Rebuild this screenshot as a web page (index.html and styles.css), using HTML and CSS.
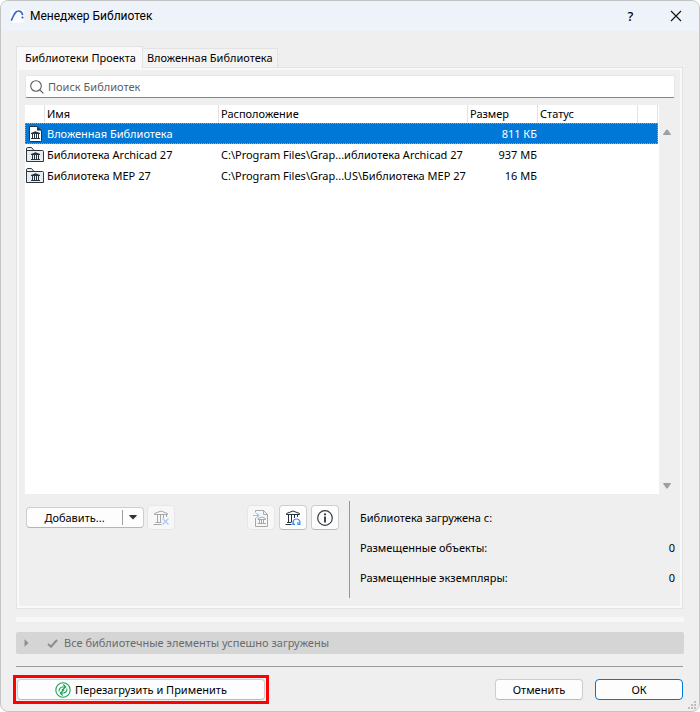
FILE: index.html
```html
<!DOCTYPE html>
<html lang="ru">
<head>
<meta charset="utf-8">
<title>Менеджер Библиотек</title>
<meta name="viewport" content="width=device-width, initial-scale=1">
<link rel="stylesheet" href="styles.css">
</head>
<body>
<svg class="sprite" aria-hidden="true">
  <symbol id="folder" viewBox="0 0 18 16">
    <path d="M.5 14.500V2Q.5 .5 1.500 .5H5.500L8 3.500H16.500Q17.500 3.500 17.500 4.500V14.500Z" fill="#e9edf2" stroke="#2b3640"/>
    <path d="M1 3.500H8" stroke="#2b3640"/>
    <path d="M5 8V7L9.500 5.300 14 7V8ZM6 8h1v4H6ZM8 8h1v4H8ZM10 8h1v4H10ZM12 8h1v4H12ZM5 12h9v1H5Z" fill="#26323c"/>
  </symbol>
</svg>
<main class="window">
  <header class="titlebar">
    <svg class="logo" viewBox="0 0 14 14" aria-hidden="true">
      <rect width="14" height="14" rx="2" fill="#fafcff"/>
      <path d="M1.500 11C4 6 5 2 8.500 2c2.500 0 3.500 1.500 4 3.500" fill="none" stroke="#4169c4" stroke-width="1.700" stroke-linecap="round"/>
      <circle cx="12.500" cy="8.500" r="1" fill="#26499c"/>
    </svg>
    <h1 class="title">Менеджер Библиотек</h1>
    <button class="caption-button help" type="button" aria-label="Справка">?</button>
    <button class="caption-button" type="button" aria-label="Закрыть">
      <svg width="12" height="12" viewBox="0 0 12 12"><path d="M1 1 11 11M11 1 1 11" stroke="#111" stroke-width="1.100"/></svg>
    </button>
  </header>

  <div class="content">
    <nav class="tabs" role="tablist">
      <button class="tab active" type="button" role="tab" aria-selected="true">Библиотеки Проекта</button>
      <button class="tab" type="button" role="tab" aria-selected="false">Вложенная Библиотека</button>
    </nav>
    <section class="panel">
      <label class="search">
        <svg width="14" height="14" viewBox="0 0 14 14" aria-hidden="true"><circle cx="6" cy="6" r="5.300" fill="none" stroke="#5c5c5c" stroke-width="1.100"/><path d="M9.800 9.800 13.300 13.300" stroke="#5c5c5c" stroke-width="1.200"/></svg>
        <input type="search" placeholder="Поиск Библиотек" aria-label="Поиск Библиотек">
      </label>
      <div class="list">
        <div class="sheet">
          <table>
            <colgroup><col class="c-icon"><col class="c-name"><col><col class="c-size"><col class="c-status"><col class="c-end"></colgroup>
            <thead>
              <tr><th></th><th>Имя</th><th>Расположение</th><th>Размер</th><th>Статус</th><th></th></tr>
            </thead>
            <tbody>
              <tr class="selected">
                <td class="icon"><svg width="18" height="16" viewBox="0 0 18 16" aria-hidden="true"><path d="M3.500.5H11L15.500 5V14.500Q15.500 15.500 14.500 15.500H4.500Q3.500 15.500 3.500 14.500Z" fill="#fff" stroke="#26323c"/><path d="M11 .5V4.500H15.500ZM5 8V7L9.500 5.300 14 7V8ZM6 8h1v4H6ZM8 8h1v4H8ZM10 8h1v4H10ZM12 8h1v4H12ZM5 12h9v1H5Z" fill="#26323c"/></svg></td>
                <td>Вложенная Библиотека</td><td></td><td class="num">811 КБ</td><td></td><td></td>
              </tr>
              <tr>
                <td class="icon"><svg width="18" height="16"><use href="#folder"/></svg></td>
                <td>Библиотека Archicad 27</td><td>C:\Program Files\Grap...иблиотека Archicad 27</td><td class="num">937 МБ</td><td></td><td></td>
              </tr>
              <tr>
                <td class="icon"><svg width="18" height="16"><use href="#folder"/></svg></td>
                <td>Библиотека MEP 27</td><td>C:\Program Files\Grap...US\Библиотека MEP 27</td><td class="num">16 МБ</td><td></td><td></td>
              </tr>
            </tbody>
          </table>
        </div>
        <div class="scroll" aria-hidden="true">
          <svg width="10" height="6" viewBox="0 0 10 6"><path d="M1 5.500 4.200.8Q5 0 5.800.8L9 5.500Q9 6 8.500 6H1.500Q1 6 1 5.500Z" fill="#a0a0a0"/></svg>
          <svg width="10" height="6" viewBox="0 0 10 6"><path d="M1 .5 4.200 5.200Q5 6 5.800 5.200L9 .5Q9 0 8.500 0H1.500Q1 0 1 .5Z" fill="#a0a0a0"/></svg>
        </div>
      </div>
      <div class="lower">
        <div class="tools">
          <div class="split">
            <button class="split-main" type="button">Добавить...</button>
            <button class="split-arrow" type="button" aria-label="Варианты добавления"><svg width="8" height="5" viewBox="0 0 8 5"><path d="M.5 0H7.500Q8 .5 7.500 1L4 4.500 .5 1Q0 .5 .5 0Z" fill="#333"/></svg></button>
          </div>
          <button class="tool" type="button" disabled aria-label="Удалить библиотеку">
            <svg width="16" height="16" viewBox="0 0 16 16" fill="none" stroke="#a8a8a8"><path d="M1.500 3.500 8 1 14.500 3.500V4.500H1.500ZM4.500 5v7M7.500 5v7M10.500 5v3M13.500 5v2M2.500 12.500H8.500M.5 14.500H8.500"/><path d="M9.500 8.500 15.500 14.500M15.500 8.500 9.500 14.500" stroke="#a9c9f6" stroke-width="1.200"/></svg>
          </button>
          <button class="tool push" type="button" disabled aria-label="Вложить библиотеку">
            <svg width="16" height="18" viewBox="0 0 16 18" fill="none" stroke="#a8a8a8"><path d="M2.500 3.500V1.500H10.500L14.500 5.500V17.500H2.500V9M10.500 1.500V5.500H14.500"/><path d="M5 10.500V9.500L8.800 8 12.500 9.500V10.500ZM6.500 10.500v4M8.500 10.500v4M10.500 10.500v4M4.500 14.500h8.500"/><path d="M0 6.500H5.500M3.500 4.300 5.800 6.500 3.500 8.700" stroke="#9fc4f8" stroke-width="1.200"/></svg>
          </button>
          <button class="tool" type="button" aria-label="Обновить библиотеку">
            <svg width="16" height="16" viewBox="0 0 16 16" fill="none" stroke="#26323c"><path d="M1.500 3.500 8 1 14.500 3.500V4.500H1.500ZM3.500 5v7M6.500 5v7M9.500 5v3M12.500 5v2M2 12.500H6.500M.5 14.500H6.500"/><path d="M9.200 14.500C7 12 8.500 9 11.500 9c3 0 4.300 3 2.800 5.300M8 11.500V14.500H10M15.500 14.500H13V12" stroke="#3989f5" stroke-width="1.200"/></svg>
          </button>
          <button class="tool" type="button" aria-label="Информация">
            <svg width="16" height="16" viewBox="0 0 16 16"><circle cx="8" cy="8" r="7.300" fill="none" stroke="#333b43" stroke-width="1.200"/><circle cx="8" cy="4.300" r="1.100" fill="#26323c"/><path d="M8 6.500V12.500" stroke="#26323c" stroke-width="1.800"/></svg>
          </button>
        </div>
        <dl class="info">
          <div><dt>Библиотека загружена с:</dt><dd></dd></div>
          <div><dt>Размещенные объекты:</dt><dd>0</dd></div>
          <div><dt>Размещенные экземпляры:</dt><dd>0</dd></div>
        </dl>
      </div>
    </section>
    <div class="strip"></div>
    <div class="status" role="status">
      <svg width="5" height="8" viewBox="0 0 5 8" aria-hidden="true"><path d="M.5 .3 4.500 4 .5 7.700Z" fill="#8f8f8f"/></svg>
      <svg class="check" width="11" height="9" viewBox="0 0 11 9" aria-hidden="true"><path d="M1 5 4 7.700 10 1" fill="none" stroke="#8c8c8c" stroke-width="2"/></svg>
      <span>Все библиотечные элементы успешно загружены</span>
    </div>
    <footer class="footer">
      <div class="highlight">
        <button class="button apply" type="button">
          <svg width="16" height="16" viewBox="0 0 16 16" fill="none" stroke="#18a558" stroke-width="1.100" aria-hidden="true"><circle cx="8" cy="8" r="7.200"/><path d="M4.200 9.500C3.500 7 5.500 5 7.500 5H10.800M8.300 2.500 10.800 5 6.800 8.200M11.800 6.500C12.500 9 10.500 11 8.500 11H5.200M7.700 13.500 5.200 11 9.200 7.800"/></svg>
          Перезагрузить и Применить
        </button>
      </div>
      <button class="button" type="button">Отменить</button>
      <button class="button primary" type="button">ОК</button>
    </footer>
  </div>
  <svg class="grip" width="8" height="8" viewBox="0 0 8 8" aria-hidden="true"><path d="M6 0h2v2H6ZM3 3h2v2H3ZM6 3h2v2H6ZM0 6h2v2H0ZM3 6h2v2H3ZM6 6h2v2H6Z" fill="#bdbdbd"/></svg>
</main>
</body>
</html>
```
FILE: styles.css
```css
* {
  box-sizing: border-box;
}

body {
  margin: 0;
  background: #fff;
  color: #000;
  font: 11px/16px "Noto Sans", "Open Sans", sans-serif;
}

button,
input {
  margin: 0;
  padding: 0;
  border: 0;
  background: none;
  color: inherit;
  font: inherit;
}

svg {
  display: block;
  flex: none;
}

.sprite {
  position: absolute;
  width: 0;
  height: 0;
}

.window {
  position: relative;
  display: flex;
  flex-direction: column;
  min-height: 100vh;
  overflow: hidden;
  border: 1px solid #c4c4c4;
  border-radius: 8px;
  background: #efefef;
}

.titlebar {
  display: flex;
  align-items: center;
  height: 30px;
  padding: 0 1px 0 9px;
  background: #eef3f9;
}

.logo {
  width: 14px;
  height: 14px;
}

.title {
  flex: 1;
  margin: 0 0 0 6px;
  font-family: Roboto, "Noto Sans", sans-serif;
  font-size: 12px;
  font-weight: 400;
}

.caption-button {
  display: grid;
  place-items: center;
  width: 45px;
  height: 30px;
}

.help {
  font-size: 13px;
  font-weight: 500;
}

.content {
  display: flex;
  flex: 1;
  flex-direction: column;
  padding: 15px 15px 7px;
}

.tabs {
  display: flex;
  align-items: flex-end;
  height: 21px;
}

.tab {
  height: 19px;
  padding: 0 4px;
  border: 1px solid #e3e3e3;
  border-width: 1px 1px 0 0;
  background: #f3f3f3;
}

.tab.active {
  position: relative;
  height: 22px;
  margin-bottom: -1px;
  padding: 0 6px 0 8px;
  border-width: 1px 1px 0 1px;
  background: #f9f9f9;
}

.panel {
  display: flex;
  flex: 1;
  flex-direction: column;
  margin-right: 1px;
  padding: 4px 3px 7px 5px;
  border: 1px solid #e3e3e3;
  box-shadow: inset 0 0 0 2px #f9f9f9;
}

.search {
  display: flex;
  align-items: center;
  height: 23px;
  margin: 3px 4px 7px 3px;
  padding-left: 4px;
  border: 1px solid #e6e6e6;
  border-bottom-color: #858585;
  border-radius: 2px;
  background: #fff;
}

.search input {
  flex: 1;
  min-width: 0;
  margin-left: 4px;
  outline: 0;
}

.search input::placeholder {
  color: #606060;
  opacity: 1;
}

.list {
  display: flex;
  flex: 1;
  min-height: 120px;
  margin-left: 3px;
}

.sheet {
  flex: 1;
  padding-right: 1px;
  background: #fff;
}

table {
  width: 100%;
  border-collapse: separate;
  border-spacing: 0;
  table-layout: fixed;
}

.c-icon {
  width: 20px;
}

.c-name {
  width: 174px;
}

.c-size {
  width: 70px;
}

.c-status {
  width: 100px;
}

.c-end {
  width: 20px;
}

th,
td {
  padding: 0 0 0 2px;
  overflow: hidden;
  text-align: left;
  white-space: nowrap;
}

th {
  height: 18px;
  border-right: 1px solid #e3e3e3;
  font-weight: 400;
}

td {
  height: 21px;
}

td.icon {
  padding: 0 0 0 1px;
}

td.num {
  padding: 0 1px 0 0;
  text-align: right;
}

.selected {
  background: #0078d7;
  color: #fff;
  outline: 1px dotted #ff872a;
  outline-offset: -1px;
}

.scroll {
  display: flex;
  flex-direction: column;
  align-items: center;
  justify-content: space-between;
  width: 16px;
  margin-right: 4px;
  padding: 24px 0 5px;
}

.lower {
  display: flex;
  padding: 7px 4px 3px;
}

.tools {
  display: flex;
  align-items: flex-start;
  width: 324px;
  padding: 4px 10px 0 0;
  border-right: 1px solid #969696;
}

.split {
  display: flex;
  align-items: center;
  width: 118px;
  height: 21px;
  margin: 2px 3px 0 0;
  border: 1px solid #cdcdcd;
  border-bottom-color: #b5b5b5;
  border-radius: 4px;
  background: #fdfdfd;
}

.split-main {
  flex: 1;
}

.split-arrow {
  display: grid;
  place-items: center;
  width: 21px;
  height: 15px;
  border-left: 1px solid #9d9d9d;
}

.tool {
  display: grid;
  place-items: center;
  width: 28px;
  height: 25px;
  margin-right: 4px;
  border: 1px solid #cfcfcf;
  border-bottom-color: #bbb;
  border-radius: 4px;
  background: #fdfdfd;
}

.tool:last-child {
  margin-right: 0;
}

.tool:disabled {
  border-color: #e6e6e6;
  background: #f7f7f7;
}

.push {
  margin-left: auto;
}

.info {
  flex: 1;
  margin: 0;
  padding: 9px 0 12px 10px;
}

.info div {
  display: flex;
  justify-content: space-between;
  height: 16px;
  margin-bottom: 14px;
}

.info div:last-child {
  margin-bottom: 0;
}

.info dd {
  margin: 0;
}

.strip {
  height: 5px;
  margin: 8px 0 10px;
  background: #f7f7f7;
}

.status {
  display: flex;
  align-items: center;
  height: 22px;
  padding-left: 8px;
  border-radius: 2px;
  background: #d5d5d5;
  color: #6b6b6b;
}

.check {
  margin: 0 6px 0 18px;
}

.footer {
  display: flex;
  align-items: center;
  gap: 12px;
  margin: 12px 1px 0 0;
  padding-top: 8px;
  border-top: 1px solid #9b9b9b;
}

.button {
  display: flex;
  align-items: center;
  justify-content: center;
  gap: 4px;
  width: 88px;
  height: 21px;
  border: 1px solid #cdcdcd;
  border-bottom-color: #bbb;
  border-radius: 4px;
  background: #fdfdfd;
}

.primary {
  border-color: #0078d7;
}

.highlight {
  margin: 0 auto 0 -3px;
  padding: 1px;
  border: 3px solid #f00;
}

.apply {
  width: 248px;
}

.grip {
  position: absolute;
  right: 3px;
  bottom: 2px;
}
```
